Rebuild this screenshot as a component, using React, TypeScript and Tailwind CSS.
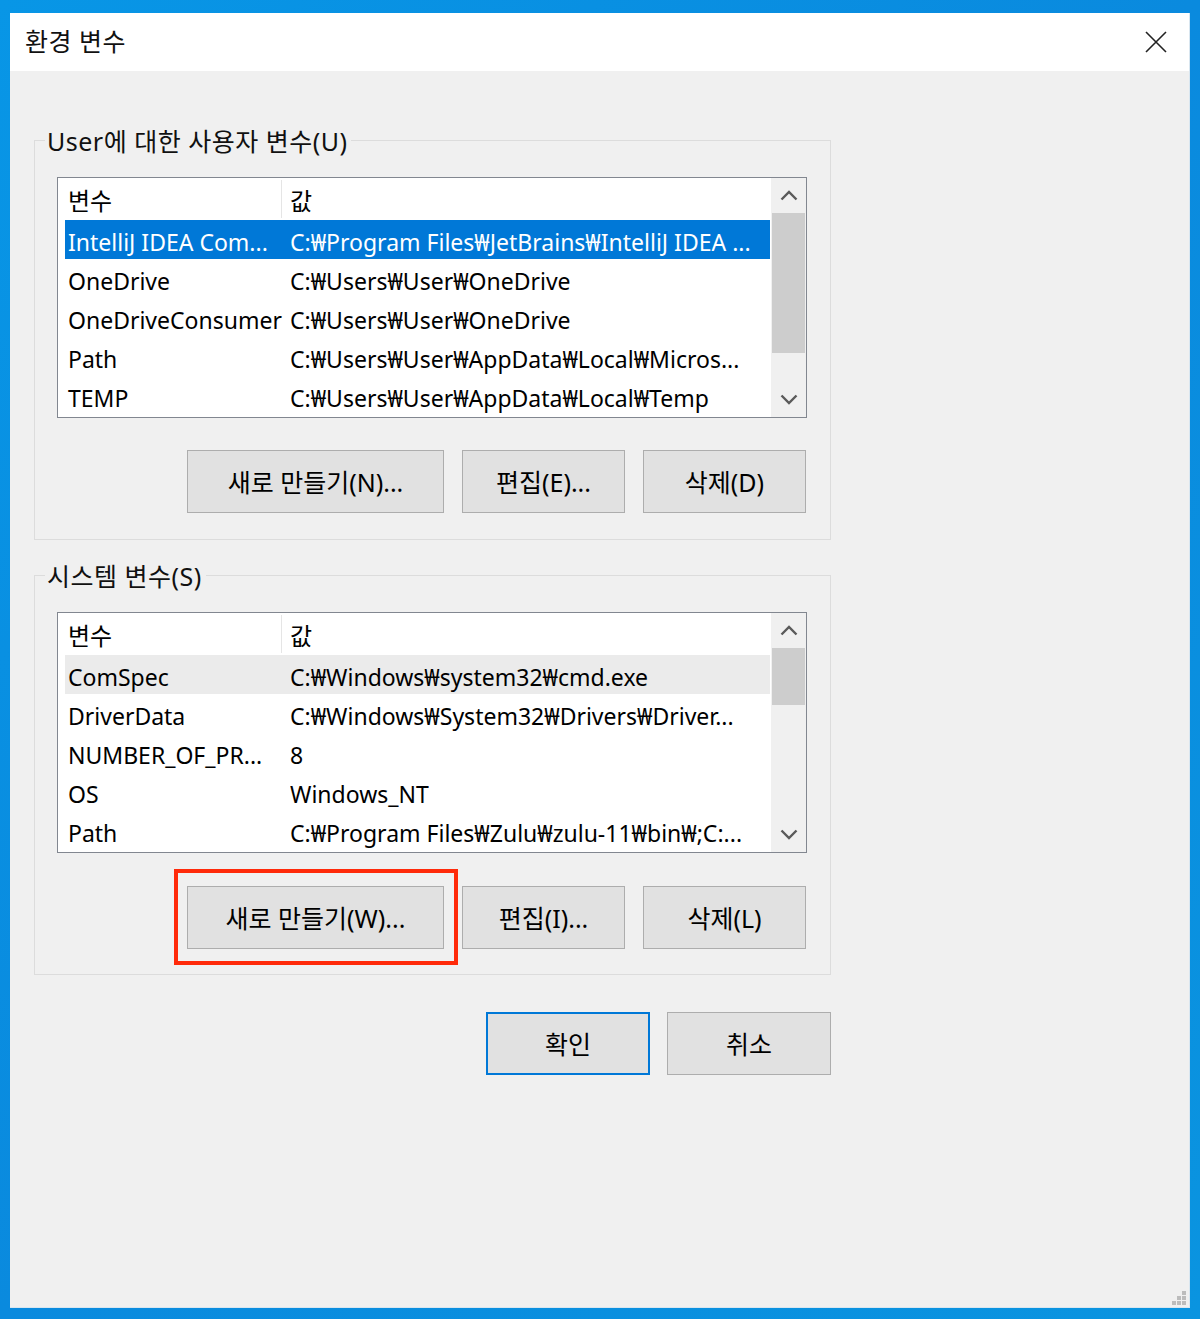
import React from "react";

type Row = { name: string; value: string; state?: "selected" | "hover" };

const FONT = { fontFamily: '"Noto Sans", "Noto Sans CJK KR", sans-serif' };

function Chevron({ dir }: { dir: "up" | "down" }) {
  return (
    <svg width="18" height="11" viewBox="0 0 18 11" fill="none">
      {dir === "up" ? (
        <path d="M1.5 9.5 L9 2 L16.5 9.5" stroke="#5a5a5a" strokeWidth="2.4" />
      ) : (
        <path d="M1.5 1.5 L9 9 L16.5 1.5" stroke="#5a5a5a" strokeWidth="2.4" />
      )}
    </svg>
  );
}

function ListView({ rows, thumbHeight }: { rows: Row[]; thumbHeight: number }) {
  return (
    <div className="flex h-[241px] w-[750px] border border-[#828790] bg-white">
      <div className="flex w-[713px] flex-col">
        <div className="flex h-[42px] items-center text-[24px] text-black">
          <div className="flex h-[38px] w-[224px] items-center border-r border-[#e5e5e5] pl-[10px] pt-[3px]">변수</div>
          <div className="pl-[8px] pt-[3px]">값</div>
        </div>
        <div className="flex flex-col pl-[7px] pr-[1px]">
          {rows.map((r) => (
            <div
              key={r.name}
              className={
                "flex h-[39px] items-center whitespace-nowrap pt-[5px] text-[23px] leading-[30px] " +
                (r.state === "selected"
                  ? "bg-[#0078d7] text-white"
                  : r.state === "hover"
                  ? "bg-[#ebebeb] text-black"
                  : "text-black")
              }
            >
              <div className="w-[225px] overflow-hidden pl-[3px]">{r.name}</div>
              <div className="overflow-hidden">{r.value}</div>
            </div>
          ))}
        </div>
      </div>
      <div className="flex w-[35px] flex-col bg-[#f0f0f0]">
        <div className="flex h-[35px] items-center justify-center">
          <Chevron dir="up" />
        </div>
        <div className="mx-[1px] bg-[#cdcdcd]" style={{ height: thumbHeight }} />
        <div className="flex-1" />
        <div className="flex h-[35px] items-center justify-center">
          <Chevron dir="down" />
        </div>
      </div>
    </div>
  );
}

function Btn({ children, w, primary }: { children: React.ReactNode; w: string; primary?: boolean }) {
  return (
    <div
      className={
        "flex h-[63px] items-center justify-center bg-[#e1e1e1] pt-[2px] text-[25px] text-black " +
        w +
        (primary ? " border-2 border-[#0078d7]" : " border border-[#adadad]")
      }
    >
      {children}
    </div>
  );
}

export default function App() {
  const userRows: Row[] = [
    { name: "IntelliJ IDEA Com...", value: "C:₩Program Files₩JetBrains₩IntelliJ IDEA ...", state: "selected" },
    { name: "OneDrive", value: "C:₩Users₩User₩OneDrive" },
    { name: "OneDriveConsumer", value: "C:₩Users₩User₩OneDrive" },
    { name: "Path", value: "C:₩Users₩User₩AppData₩Local₩Micros..." },
    { name: "TEMP", value: "C:₩Users₩User₩AppData₩Local₩Temp" },
  ];
  const sysRows: Row[] = [
    { name: "ComSpec", value: "C:₩Windows₩system32₩cmd.exe", state: "hover" },
    { name: "DriverData", value: "C:₩Windows₩System32₩Drivers₩Driver..." },
    { name: "NUMBER_OF_PR...", value: "8" },
    { name: "OS", value: "Windows_NT" },
    { name: "Path", value: "C:₩Program Files₩Zulu₩zulu-11₩bin₩;C:..." },
  ];

  return (
    <div
      className="h-[1319px] w-[1200px] bg-gradient-to-br from-[#0896e6] via-[#0a8ade] to-[#0a94e0] pl-[10px] pt-[13px]"
      style={FONT}
    >
      <div className="flex h-[1295px] w-[1180px] flex-col border-r border-b border-[#d8e6f0] bg-[#f0f0f0]">
        {/* title bar */}
        <div className="flex h-[58px] items-center justify-between bg-white pl-[15px] pr-[22px]">
          <div className="text-[25px] tracking-[0.5px] text-[#111]">환경 변수</div>
          <svg width="22" height="22" viewBox="0 0 22 22">
            <path d="M1 1 L21 21 M21 1 L1 21" stroke="#222" strokeWidth="1.6" />
          </svg>
        </div>

        <div className="flex flex-1 flex-col pl-[24px]">
          {/* user group */}
          <div className="relative mt-[69px] flex h-[400px] w-[797px] flex-col border border-[#dcdcdc] pl-[22px] pt-[36px]">
            <div className="absolute left-[10px] top-[-17px] bg-[#f0f0f0] pl-[2px] pr-[4px] text-[25px] leading-[34px] tracking-[0.5px] text-[#111]">
              User에 대한 사용자 변수(U)
            </div>
            <ListView rows={userRows} thumbHeight={140} />
            <div className="mt-[32px] flex w-[749px] justify-end gap-[18px]">
              <Btn w="w-[257px]">새로 만들기(N)...</Btn>
              <Btn w="w-[163px]">편집(E)...</Btn>
              <Btn w="w-[163px]">삭제(D)</Btn>
            </div>
          </div>

          {/* system group */}
          <div className="relative mt-[35px] flex h-[400px] w-[797px] flex-col border border-[#dcdcdc] pl-[22px] pt-[36px]">
            <div className="absolute left-[10px] top-[-17px] bg-[#f0f0f0] pl-[2px] pr-[4px] text-[25px] leading-[34px] tracking-[0.5px] text-[#111]">
              시스템 변수(S)
            </div>
            <ListView rows={sysRows} thumbHeight={57} />
            <div className="mt-[33px] flex w-[749px] justify-end gap-[18px]">
              <div className="relative">
                <Btn w="w-[257px]">새로 만들기(W)...</Btn>
                <div className="pointer-events-none absolute bottom-[-16px] left-[-13px] right-[-14px] top-[-17px] border-[4px] border-[#ff2a0a]" />
              </div>
              <Btn w="w-[163px]">편집(I)...</Btn>
              <Btn w="w-[163px]">삭제(L)</Btn>
            </div>
          </div>

          {/* ok / cancel */}
          <div className="mt-[37px] flex w-[797px] justify-end gap-[17px]">
            <Btn w="w-[164px]" primary>
              확인
            </Btn>
            <Btn w="w-[164px]">취소</Btn>
          </div>

          <div className="flex-1" />
          <div className="flex justify-end pb-[2px] pr-[3px]">
            <div className="grid grid-cols-3 gap-[1px]">
              <div className="h-[4px] w-[4px]" />
              <div className="h-[4px] w-[4px]" />
              <div className="h-[4px] w-[4px] bg-[#bcbcbc]" />
              <div className="h-[4px] w-[4px]" />
              <div className="h-[4px] w-[4px] bg-[#bcbcbc]" />
              <div className="h-[4px] w-[4px] bg-[#bcbcbc]" />
              <div className="h-[4px] w-[4px] bg-[#bcbcbc]" />
              <div className="h-[4px] w-[4px] bg-[#bcbcbc]" />
              <div className="h-[4px] w-[4px] bg-[#bcbcbc]" />
            </div>
          </div>
        </div>
      </div>
    </div>
  );
}
